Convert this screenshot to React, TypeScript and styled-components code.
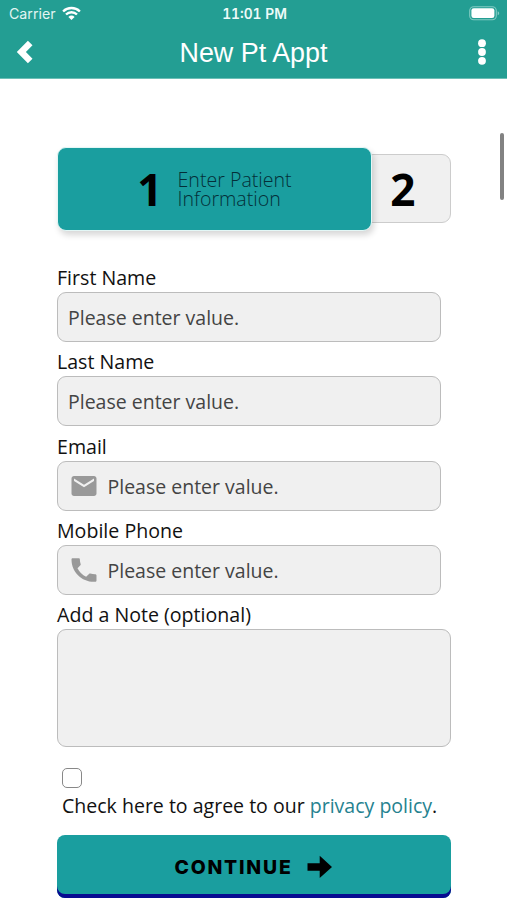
import React from 'react';
import styled, { createGlobalStyle } from 'styled-components';

const GlobalStyle = createGlobalStyle`
  *, *::before, *::after { box-sizing: border-box; }
  html, body { margin: 0; padding: 0; background: #fff; overflow: hidden; }
  body { font-family: "Open Sans", sans-serif; color: #111; }
`;

const Screen = styled.div`
  position: relative;
  width: 507px;
  height: 900px;
  overflow: hidden;
  background: #fff;
`;

const Header = styled.header`
  height: 79px;
  background: #239e93;
  border-bottom: 1px solid #6bbfb6;
  color: #fff;
`;

const StatusBar = styled.div`
  display: grid;
  grid-template-columns: 1fr auto 1fr;
  align-items: center;
  height: 27px;
  padding: 0 7px 0 9px;
  font-family: Inter, sans-serif;
`;

const Carrier = styled.span`
  display: flex;
  align-items: center;
  gap: 6px;
  font-size: 14.2px;
  color: #e2f5f2;
`;

const Clock = styled.span`
  font-size: 13.8px;
  font-weight: 600;
  font-variant-numeric: tabular-nums;
  color: #eefaf8;
`;

const BatteryIcon = styled.svg`
  justify-self: end;
`;

const NavBar = styled.div`
  display: grid;
  grid-template-columns: 40px 1fr 40px;
  align-items: center;
  height: 50px;
  padding: 0 5px;
`;

const IconButton = styled.button`
  display: flex;
  align-items: center;
  justify-content: center;
  height: 40px;
  padding: 0;
  border: 0;
  background: none;
  color: #fff;
`;

const Title = styled.h1`
  margin: 0;
  padding-top: 1px;
  font: 400 26.9px/32px "Liberation Sans", sans-serif;
  text-align: center;
`;

const Form = styled.form`
  width: 394px;
  margin: 68px 0 0 57px;
`;

const Steps = styled.div`
  display: flex;
  align-items: center;
  width: 393.5px;
  height: 84px;
`;

const ActiveStep = styled.div`
  z-index: 1;
  display: flex;
  align-items: center;
  justify-content: center;
  gap: 15px;
  width: 315px;
  height: 84px;
  border: 1px solid #e3f7f6;
  border-radius: 9px;
  background: #1a9e9f;
  box-shadow: 2px 4px 6px rgba(0, 0, 0, 0.16);
`;

const NextStep = styled.div`
  display: flex;
  flex: 1;
  align-items: center;
  justify-content: center;
  height: 69px;
  margin: -1px 0 0 -8px;
  padding-right: 9px;
  border: 1px solid #ccc;
  border-radius: 9px;
  background: #f0f0f0;
`;

const StepNumber = styled.span`
  font-size: 44px;
  font-weight: 700;
  line-height: 60px;
  color: #000;
`;

const StepLabel = styled.span`
  font-size: 19.6px;
  font-weight: 300;
  line-height: 19.5px;
  color: #042f38;
`;

const Fields = styled.div`
  margin-top: 33px;
`;

const Field = styled.div`
  height: 84.3px;
`;

const Label = styled.label`
  display: block;
  height: 28px;
  font-size: 19.6px;
  line-height: 27px;
`;

const InputBox = styled.div`
  display: flex;
  align-items: center;
  gap: 8.5px;
  width: 384px;
  height: 50px;
  padding: 0 11px 0 10px;
  border: 1px solid #bcbcbc;
  border-radius: 9px;
  background: #f0f0f0;
  color: #999;

  svg { margin-left: 1px; flex: none; }
`;

const Input = styled.input`
  flex: 1;
  min-width: 0;
  padding: 2px 0 0;
  border: 0;
  outline: 0;
  background: transparent;
  font: 400 19.5px/28px "Open Sans", sans-serif;

  &::placeholder { color: #444; opacity: 1; }
`;

const NoteArea = styled.textarea`
  display: block;
  width: 394px;
  height: 118px;
  border: 1px solid #bcbcbc;
  border-radius: 9px;
  background: #f0f0f0;
  resize: none;
`;

const Consent = styled.div`
  padding: 21px 0 0 5px;
  font-size: 19.55px;
  line-height: 27px;
  white-space: nowrap;
`;

const Checkbox = styled.input`
  display: block;
  appearance: none;
  width: 20px;
  height: 20px;
  margin: 0 0 4px;
  border: 1.5px solid #888;
  border-radius: 5px;
  background: #fff;
`;

const PolicyLink = styled.a`
  color: #25828f;
  text-decoration: none;
`;

const ContinueButton = styled.button`
  display: flex;
  align-items: center;
  justify-content: center;
  gap: 14px;
  width: 394px;
  height: 63px;
  margin-top: 16px;
  padding: 0 1px 0 0;
  border: 0;
  border-radius: 8px;
  background: #1a9e9f;
  box-shadow: inset 0 -4px 0 #080b91;
  color: #000;
  font: 800 19.4px/24px Inter, sans-serif;
  letter-spacing: 1.8px;
`;

const ScrollThumb = styled.div`
  position: absolute;
  top: 133px;
  right: 3px;
  width: 4px;
  height: 67px;
  border-radius: 2px;
  background: #828282;
`;

const WifiIcon = () => (
  <svg width="19" height="15" viewBox="0 0 19 15" fill="none" stroke="#fff" strokeWidth="2.4">
    <path d="M1.1 5.5a12 12 0 0 1 16.8 0" />
    <path d="M4 8.5a7.8 7.8 0 0 1 11 0" />
    <path d="m9.5 14-3.1-3.1a4.4 4.4 0 0 1 6.2 0z" fill="#fff" stroke="none" />
  </svg>
);

const Battery = () => (
  <BatteryIcon width="31" height="15" viewBox="0 0 31 15">
    <rect x="0.7" y="0.7" width="26.6" height="13" rx="4" fill="none" stroke="#82cbc3" strokeWidth="1.1" />
    <rect x="2.4" y="2.3" width="23" height="9.7" rx="2.3" fill="#fff" />
    <path d="M28.7 5.2c2 .8 2 3.2 0 4z" fill="#82cbc3" />
  </BatteryIcon>
);

const BackIcon = () => (
  <svg width="18" height="24" viewBox="0 0 18 24" fill="#fff">
    <path d="M0.8 12 11.9 0.8l4.6 4.4L9.9 12l6.6 6.7-4.6 4.5z" />
  </svg>
);

const MoreIcon = () => (
  <svg width="8" height="26" viewBox="0 0 8 26" fill="#fff">
    <circle cx="4" cy="4.2" r="3.9" />
    <circle cx="4" cy="13" r="3.9" />
    <circle cx="4" cy="21.8" r="3.9" />
  </svg>
);

const MailIcon = () => (
  <svg width="30" height="30" viewBox="0 0 24 24" fill="currentColor">
    <path d="M20 4H4c-1.1 0-2 .9-2 2v12c0 1.1.9 2 2 2h16c1.1 0 2-.9 2-2V6c0-1.1-.9-2-2-2zm0 4-8 5-8-5V6l8 5 8-5v2z" />
  </svg>
);

const PhoneIcon = () => (
  <svg width="30" height="30" viewBox="0 0 24 24" fill="currentColor">
    <path d="M20.8 15.4c-1.3 0-2.5-.2-3.7-.6-.4-.1-.8 0-1.1.3l-2.3 2.3a15.7 15.7 0 0 1-6.9-6.9l2.3-2.3c.3-.3.4-.7.2-1-.4-1.2-.6-2.4-.6-3.7 0-.6-.4-1-1-1H3c-.6 0-1 .4-1 1 0 9.9 8 17.9 17.9 17.9h1c.6 0 1.1-.4 1.1-1v-4c0-.6-.6-1-1.2-1z" />
  </svg>
);

const ArrowIcon = () => (
  <svg width="26" height="24" viewBox="0 0 26 24">
    <path d="M0.5 8.2h12.2V0.8L25 12 12.7 23v-7.3H0.5z" />
  </svg>
);

const fields = [
  { id: 'first', label: 'First Name' },
  { id: 'last', label: 'Last Name' },
  { id: 'email', label: 'Email', icon: <MailIcon /> },
  { id: 'phone', label: 'Mobile Phone', icon: <PhoneIcon /> },
];

export default function App() {
  return (
    <Screen>
      <GlobalStyle />
      <Header>
        <StatusBar>
          <Carrier>Carrier <WifiIcon /></Carrier>
          <Clock>11:01 PM</Clock>
          <Battery />
        </StatusBar>
        <NavBar>
          <IconButton aria-label="Back"><BackIcon /></IconButton>
          <Title>New Pt Appt</Title>
          <IconButton aria-label="More"><MoreIcon /></IconButton>
        </NavBar>
      </Header>
      <Form>
        <Steps>
          <ActiveStep>
            <StepNumber>1</StepNumber>
            <StepLabel>Enter Patient<br />Information</StepLabel>
          </ActiveStep>
          <NextStep><StepNumber>2</StepNumber></NextStep>
        </Steps>
        <Fields>
          {fields.map((f) => (
            <Field key={f.id}>
              <Label htmlFor={f.id}>{f.label}</Label>
              <InputBox>
                {f.icon}
                <Input id={f.id} placeholder="Please enter value." />
              </InputBox>
            </Field>
          ))}
          <Label htmlFor="note">Add a Note (optional)</Label>
          <NoteArea id="note" />
        </Fields>
        <Consent>
          <Checkbox type="checkbox" aria-label="Agree" />
          Check here to agree to our <PolicyLink>privacy policy</PolicyLink>.
        </Consent>
        <ContinueButton type="button">
          CONTINUE <ArrowIcon />
        </ContinueButton>
      </Form>
      <ScrollThumb />
    </Screen>
  );
}
